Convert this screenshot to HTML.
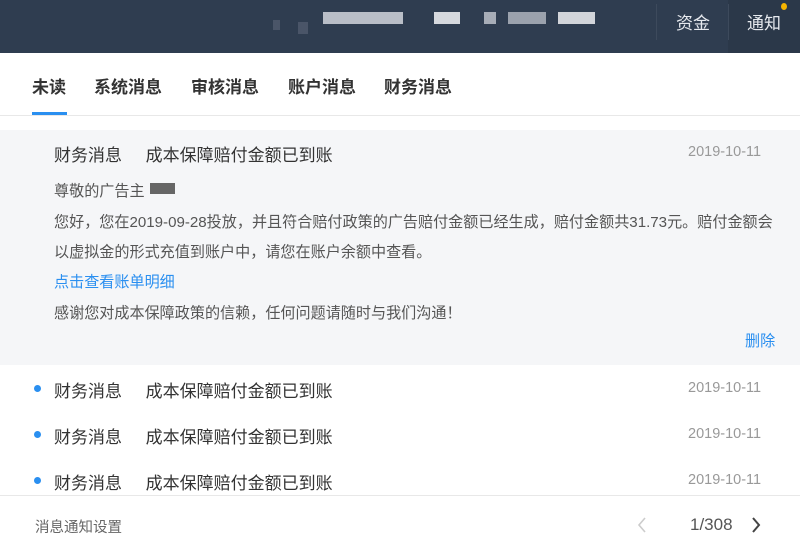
<!DOCTYPE html>
<html><head><meta charset="utf-8"><style>
*{margin:0;padding:0;box-sizing:border-box}
body{width:800px;height:551px;overflow:hidden;background:#fff;font-family:"Liberation Sans","Noto Sans CJK SC",sans-serif;position:relative}
.a{position:absolute;white-space:nowrap}
.hd{position:absolute;left:0;top:0;width:800px;height:53px;background:#2f3d50}
.tab{font-size:17px;font-weight:bold;color:#333;top:73px}
.t{font-size:17px;color:#333}
.d{font-size:14.5px;color:#999}
.b{font-size:15.1px;color:#555}
.dot{position:absolute;left:34px;width:7px;height:7px;border-radius:50%;background:#2a8ff0}
</style></head><body>
<div class="hd"></div>
<div class="a" style="left:728px;top:0;width:72px;height:53px;background:#2b3849"></div>
<div class="a" style="left:656px;top:4px;width:1px;height:36px;background:#3d4a5c"></div>
<div class="a" style="left:728px;top:4px;width:1px;height:36px;background:#3d4a5c"></div>
<div class="a" style="left:273px;top:20px;width:7px;height:10px;background:#4a5568"></div>
<div class="a" style="left:298px;top:22px;width:10px;height:12px;background:#4a5568"></div>
<div class="a" style="left:323px;top:12px;width:80px;height:12px;background:#b9bec7"></div>
<div class="a" style="left:434px;top:12px;width:26px;height:12px;background:#d6d9de"></div>
<div class="a" style="left:484px;top:12px;width:12px;height:12px;background:#a7adb7"></div>
<div class="a" style="left:508px;top:12px;width:38px;height:12px;background:#9ba2ad"></div>
<div class="a" style="left:558px;top:12px;width:37px;height:12px;background:#d2d5da"></div>
<div class="a" style="left:676px;top:9px;color:#e6e9ee;font-size:17px">资金</div>
<div class="a" style="left:747px;top:9px;color:#e6e9ee;font-size:17px">通知</div>
<div class="a" style="left:781px;top:3px;width:6px;height:7px;border-radius:50%;background:#f5b400"></div>
<div class="a tab" style="left:32px">未读</div>
<div class="a tab" style="left:94px">系统消息</div>
<div class="a tab" style="left:191px">审核消息</div>
<div class="a tab" style="left:288px">账户消息</div>
<div class="a tab" style="left:384px">财务消息</div>
<div class="a" style="left:32px;top:112px;width:35px;height:4px;background:#2a8ff0"></div>
<div class="a" style="left:0;top:115px;width:800px;height:1px;background:#e8e8e8"></div>
<div class="a" style="left:0;top:130px;width:800px;height:235px;background:#f5f6f8"></div>
<div class="a t" style="left:54px;top:141px">财务消息&nbsp;&nbsp;&nbsp;&nbsp;&nbsp;成本保障赔付金额已到账</div>
<div class="a d" style="left:688px;top:144px">2019-10-11</div>
<div class="a b" style="left:54px;top:179px">尊敬的广告主</div>
<div class="a" style="left:150px;top:183px;width:25px;height:11px;background:#666"></div>
<div class="a b" style="left:54px;top:210px">您好，您在2019-09-28投放，并且符合赔付政策的广告赔付金额已经生成，赔付金额共31.73元。赔付金额会</div>
<div class="a b" style="left:54px;top:240px">以虚拟金的形式充值到账户中，请您在账户余额中查看。</div>
<div class="a b" style="left:54px;top:270px;color:#2a8ff0">点击查看账单明细</div>
<div class="a b" style="left:54px;top:301px">感谢您对成本保障政策的信赖，任何问题请随时与我们沟通！</div>
<div class="a b" style="left:745px;top:329px;color:#2a8ff0">删除</div>
<div class="dot" style="top:385px"></div>
<div class="a t" style="left:54px;top:377px">财务消息&nbsp;&nbsp;&nbsp;&nbsp;&nbsp;成本保障赔付金额已到账</div>
<div class="a d" style="left:688px;top:380px">2019-10-11</div>
<div class="dot" style="top:431px"></div>
<div class="a t" style="left:54px;top:423px">财务消息&nbsp;&nbsp;&nbsp;&nbsp;&nbsp;成本保障赔付金额已到账</div>
<div class="a d" style="left:688px;top:426px">2019-10-11</div>
<div class="dot" style="top:477px"></div>
<div class="a t" style="left:54px;top:469px">财务消息&nbsp;&nbsp;&nbsp;&nbsp;&nbsp;成本保障赔付金额已到账</div>
<div class="a d" style="left:688px;top:472px">2019-10-11</div>
<div class="a" style="left:0;top:495px;width:800px;height:1px;background:#e8e8e8"></div>
<div class="a" style="left:35px;top:516px;font-size:14.5px;color:#666">消息通知设置</div>
<svg class="a" style="left:636px;top:516px" width="12" height="18"><path d="M9 2L3 9l6 7" stroke="#ccc" stroke-width="1.6" fill="none"/></svg>
<div class="a" style="left:690px;top:515px;font-size:17px;color:#555">1/308</div>
<svg class="a" style="left:750px;top:516px" width="12" height="18"><path d="M3 2l6 7-6 7" stroke="#444" stroke-width="2" fill="none"/></svg>
</body></html>
